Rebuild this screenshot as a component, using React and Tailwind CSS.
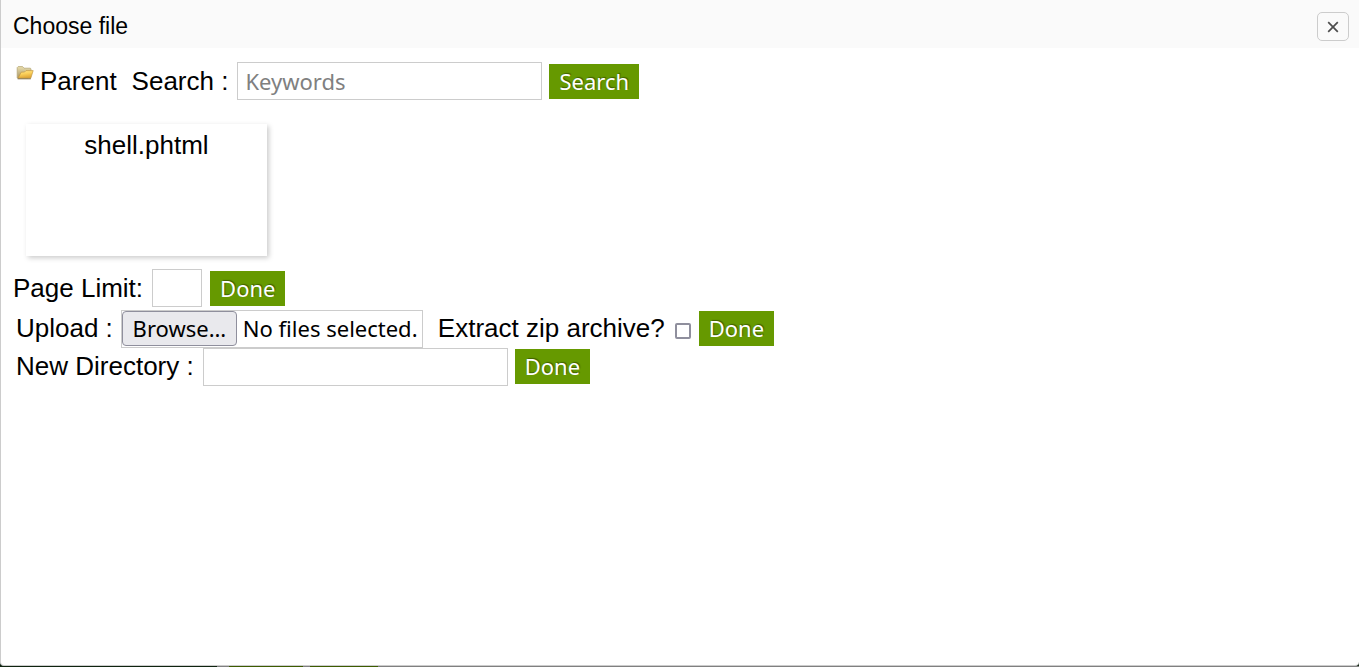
import React from "react";

function FolderIcon() {
  return (
    <svg viewBox="0 0 18 16" className="h-4 w-[18px] shrink-0" aria-hidden="true">
      <defs>
        <linearGradient id="folder-front" x1="0" y1="0" x2="0.3" y2="1">
          <stop offset="0" stopColor="#ffe994" />
          <stop offset="0.5" stopColor="#fbd05a" />
          <stop offset="1" stopColor="#dfa636" />
        </linearGradient>
        <linearGradient id="folder-back" x1="0" y1="0" x2="0" y2="1">
          <stop offset="0" stopColor="#eadfae" />
          <stop offset="1" stopColor="#a89464" />
        </linearGradient>
      </defs>
      <path d="M1.2 13V2.6L2.2 1.6H6.6L8 3.2H14.4L15 4V7L12 13Z" fill="url(#folder-back)" stroke="#b8a878" strokeWidth="0.8" />
      <path d="M2 13.2L5.2 7.2L8.6 7L10 5.6H17.2L14.8 13.2Z" fill="url(#folder-front)" stroke="#c39a45" strokeWidth="0.7" />
      <path d="M1.6 13.8H14.8" stroke="#85744c" strokeWidth="1" />
    </svg>
  );
}

function GreenButton({ children }) {
  return (
    <button
      type="button"
      className="h-[35px] shrink-0 bg-[#669900] px-[10px] font-['Noto_Sans',sans-serif] text-[22px] leading-[35px] text-white [text-shadow:1px_-1px_1px_#3f6000]"
    >
      {children}
    </button>
  );
}

const field =
  "h-[38px] border border-[#cccccc] bg-white px-[7px] font-['Noto_Sans',sans-serif] text-[22px] text-black placeholder:text-[#808080] outline-none";

export default function App() {
  return (
    <div className="flex h-screen flex-col bg-[#0f2410] font-['Liberation_Sans',Arial,sans-serif] text-[26px] leading-[38px] text-black">
      <div className="flex grow flex-col overflow-hidden rounded-b border-b border-l border-[#cccccc] bg-white">
        <header className="flex h-12 shrink-0 items-center justify-between bg-[#fafafa] pr-[10px] pl-3 pt-1">
          <h1 className="text-[23px]">Choose file</h1>
          <button
            type="button"
            aria-label="Close"
            className="flex h-[29px] w-8 items-center justify-center rounded-[5px] border border-[#cccccc] bg-[#fafafa] pt-px"
          >
            <svg viewBox="0 0 12 12" className="h-3 w-3" aria-hidden="true">
              <path d="M1.2 1.2L10.8 10.8M10.8 1.2L1.2 10.8" stroke="#4d4d4d" strokeWidth="1.7" />
            </svg>
          </button>
        </header>

        <main className="px-3 pt-[14px]">
          <form className="flex items-center pl-[3px]">
            <a href="#parent" className="flex items-center gap-1.5">
              <span className="pb-4">
                <FolderIcon />
              </span>
              <span>Parent</span>
            </a>
            <label htmlFor="keywords" className="mr-[9px] ml-[15px]">Search :</label>
            <input id="keywords" type="text" placeholder="Keywords" className={field + " mr-[7px] w-[305px]"} />
            <GreenButton>Search</GreenButton>
          </form>

          <ul className="mt-6 mb-[13px] flex pl-[13px]">
            <li className="h-[132px] w-[241px] bg-white pt-[2px] text-center shadow-[2px_2px_5px_#cccccc]">
              <a href="#shell">shell.phtml</a>
            </li>
          </ul>

          <form className="flex items-center">
            <label htmlFor="limit" className="mr-[9px]">Page Limit:</label>
            <input id="limit" type="text" className={field + " mr-2 w-[50px]"} />
            <GreenButton>Done</GreenButton>
          </form>

          <form className="mt-[3px] flex items-start pl-[3px]">
            <label htmlFor="upload" className="mr-2 leading-[36px]">Upload :</label>
            <div className="relative flex h-[38px] w-[302px] items-start gap-1.5 border border-[#cccccc] font-['Noto_Sans',sans-serif] text-[22px] leading-[33px] whitespace-nowrap">
              <span className="h-[35px] w-[115px] shrink-0 rounded-[4px] border border-[#8f8f9d] bg-[#e9e9ed] text-center">Browse…</span>
              <span className="pt-px">No files selected.</span>
              <input id="upload" type="file" className="absolute inset-0 h-full w-full opacity-0" />
            </div>
            <label htmlFor="extract" className="mr-[10px] ml-[15px] leading-[36px]">Extract zip archive?</label>
            <input
              id="extract"
              type="checkbox"
              className="mt-[13px] mr-2 h-4 w-4 appearance-none rounded-[2px] border-2 border-[#8f8f9d] bg-white checked:bg-[#0060df]"
            />
            <div className="flex pt-px">
              <GreenButton>Done</GreenButton>
            </div>
          </form>

          <form className="flex items-start pl-[3px]">
            <label htmlFor="directory" className="mr-[9px] leading-[36px]">New Directory :</label>
            <input id="directory" type="text" className={field + " mr-[7px] w-[305px]"} />
            <div className="flex pt-px">
              <GreenButton>Done</GreenButton>
            </div>
          </form>
        </main>
      </div>
      <div className="flex h-px shrink-0 bg-[#808080]">
        <span className="w-[217px] bg-[#0f2410]" />
        <span className="ml-3 w-[74px] bg-[#3d5c00]" />
        <span className="ml-[7px] w-[68px] bg-[#3d5c00]" />
      </div>
    </div>
  );
}
